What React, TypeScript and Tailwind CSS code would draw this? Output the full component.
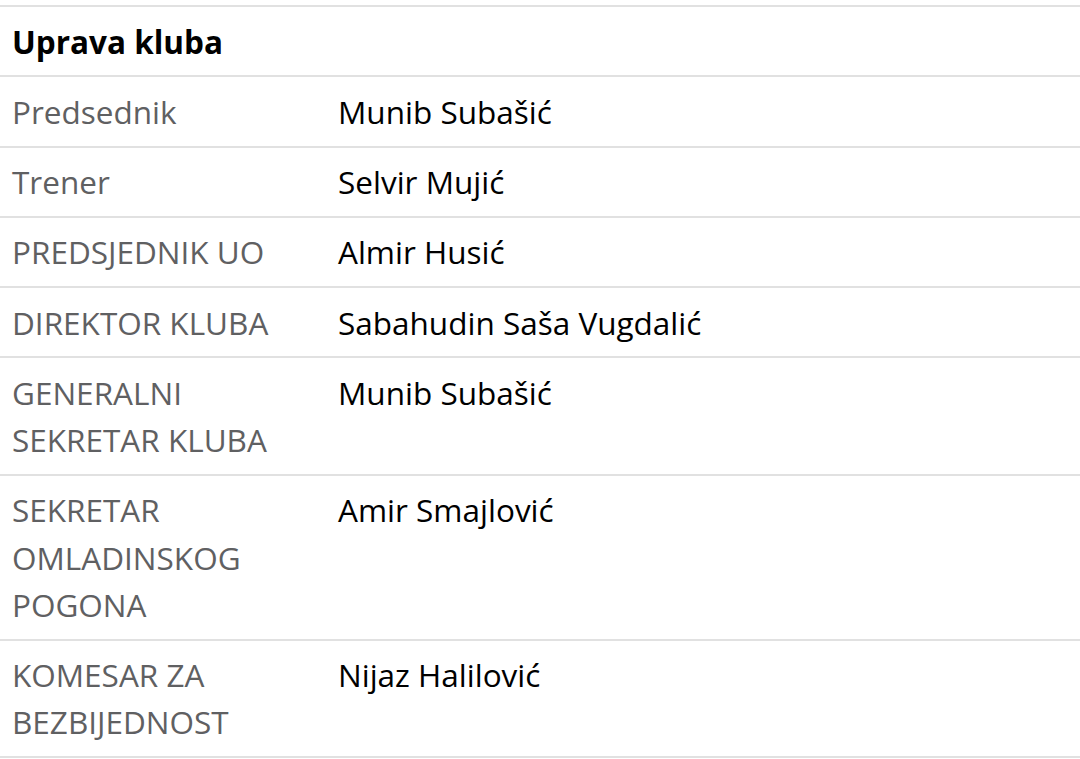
import React from "react";

const rows: [string, string][] = [
  ["Predsednik", "Munib Subašić"],
  ["Trener", "Selvir Mujić"],
  ["PREDSJEDNIK UO", "Almir Husić"],
  ["DIREKTOR KLUBA", "Sabahudin Saša Vugdalić"],
  ["GENERALNI SEKRETAR KLUBA", "Munib Subašić"],
  ["SEKRETAR OMLADINSKOG POGONA", "Amir Smajlović"],
  ["KOMESAR ZA BEZBIJEDNOST", "Nijaz Halilović"],
];

export default function App() {
  return (
    <div
      className="w-[1080px] h-[759px] bg-white overflow-hidden pt-[5px]"
      style={{ fontFamily: '"Open Sans", sans-serif' }}
    >
      <div className="border-t-2 border-[#e1e1e1] px-[12px] py-[10.5px] text-[31.5px] leading-[47.25px] font-bold text-black">
        Uprava kluba
      </div>
      {rows.map(([label, value], i) => (
        <div
          key={i}
          className="flex border-t-2 border-[#e1e1e1] py-[10.5px] text-[31.5px] leading-[47.25px] last:border-b-2"
        >
          <div className="w-[338px] shrink-0 pl-[12px] pr-[24px] text-[#5f6062]">
            {label}
          </div>
          <div className="flex-1 text-black">{value}</div>
        </div>
      ))}
    </div>
  );
}
